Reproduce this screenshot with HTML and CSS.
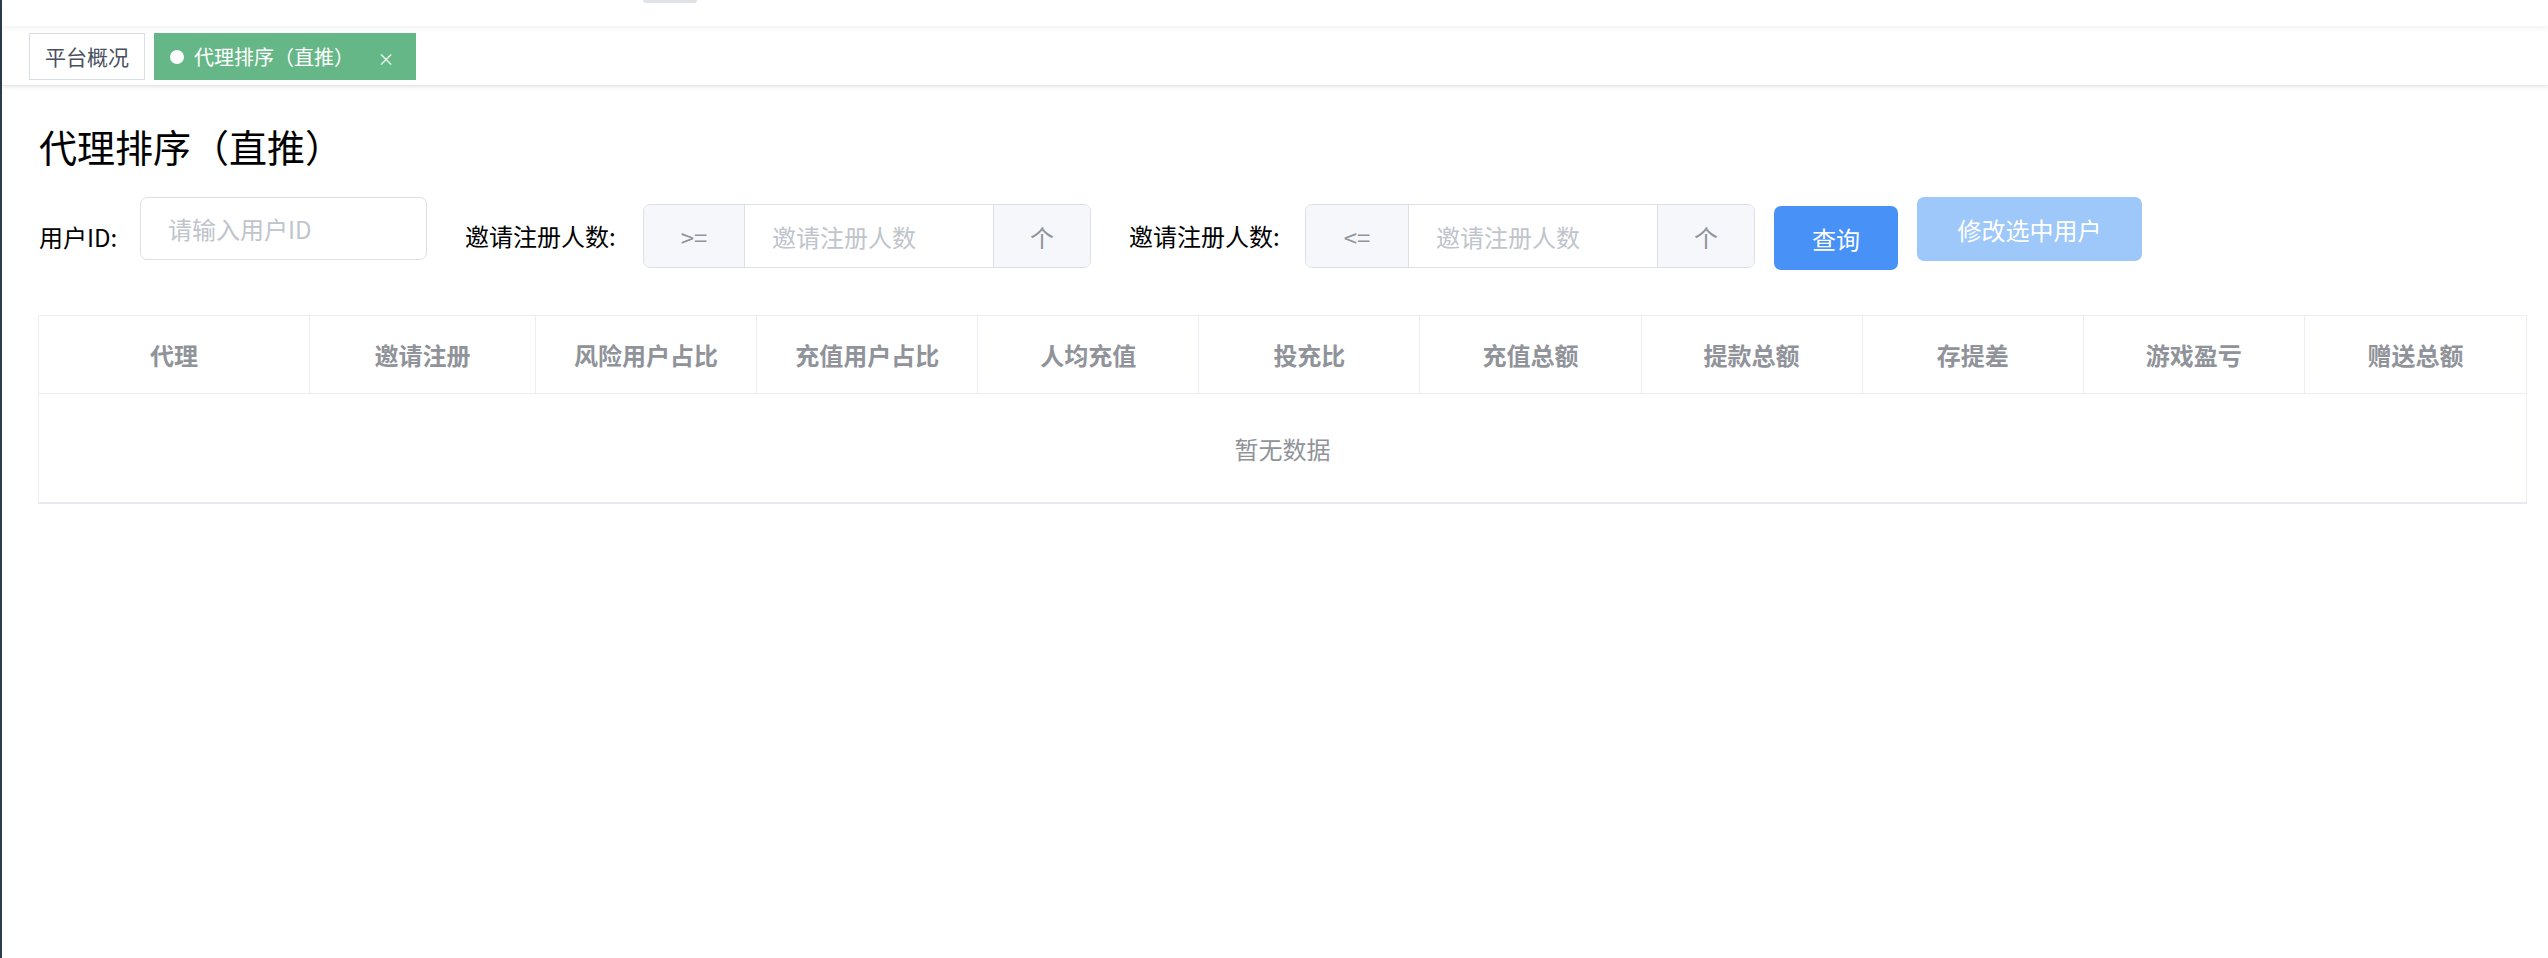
FILE: index.html
```html
<!DOCTYPE html>
<html lang="zh-CN">
<head>
<meta charset="utf-8">
<title>代理排序（直推）</title>
<link rel="stylesheet" href="styles.css">
</head>
<body>
<div class="app">
  <div class="sidebar"></div>
  <div class="main">
    <div class="navbar"><div class="pill"></div></div>
    <div class="tags">
      <div class="tag">平台概况</div>
      <div class="tag active"><span class="dot"></span><span>代理排序（直推）</span><span class="close">×</span></div>
    </div>
    <div class="content">
      <h2 class="title">代理排序（直推）</h2>
      <div class="filters">
        <div class="item item-id">
          <label class="label label-id">用户ID:</label>
          <input class="input input-id" type="text" placeholder="请输入用户ID">
        </div>
        <div class="item item-group">
          <label class="label label-count">邀请注册人数:</label>
          <div class="group">
            <div class="addon addon-pre">&gt;=</div>
            <input class="input input-mid" type="text" placeholder="邀请注册人数">
            <div class="addon addon-post">个</div>
          </div>
        </div>
        <div class="item item-group">
          <label class="label label-count">邀请注册人数:</label>
          <div class="group">
            <div class="addon addon-pre">&lt;=</div>
            <input class="input input-mid" type="text" placeholder="邀请注册人数">
            <div class="addon addon-post">个</div>
          </div>
        </div>
        <button class="btn btn-primary" type="button">查询</button>
        <button class="btn btn-disabled" type="button" disabled>修改选中用户</button>
      </div>
      <div class="table">
        <div class="thead">
          <div class="th">代理</div>
          <div class="th">邀请注册</div>
          <div class="th">风险用户占比</div>
          <div class="th">充值用户占比</div>
          <div class="th">人均充值</div>
          <div class="th">投充比</div>
          <div class="th">充值总额</div>
          <div class="th">提款总额</div>
          <div class="th">存提差</div>
          <div class="th">游戏盈亏</div>
          <div class="th">赠送总额</div>
        </div>
        <div class="empty">暂无数据</div>
      </div>
    </div>
  </div>
</div>
</body>
</html>
```
FILE: styles.css
```css
html, body {
  margin: 0;
  padding: 0;
  background: #fff;
}
body {
  font-family: "Noto Sans CJK SC", "Noto Sans", "Liberation Sans", sans-serif;
  font-size: 24px;
  color: #000;
}
.app {
  display: flex;
  min-height: 958px;
}
.sidebar {
  width: 2px;
  flex: none;
  background: #2e3b4e;
}
.main {
  flex: 1;
  display: flex;
  flex-direction: column;
  min-width: 0;
}
.navbar {
  height: 26px;
  background: #fff;
  position: relative;
  z-index: 2;
  box-shadow: 0 2px 6px rgba(0, 21, 41, 0.06);
}
.pill {
  margin-left: 641px;
  width: 54px;
  height: 3px;
  background: #dfe2e7;
  border-radius: 0 0 10px 10px;
}
.tags {
  height: 59px;
  box-sizing: border-box;
  padding: 7px 0 0 27px;
  display: flex;
  align-items: flex-start;
  gap: 9px;
  background: #fff;
  position: relative;
  z-index: 1;
  box-shadow: 0 2px 4px 0 rgba(0, 0, 0, 0.10), 0 0 3px 0 rgba(0, 0, 0, 0.04);
}
.tag {
  height: 47px;
  box-sizing: border-box;
  border: 1px solid #d8dce5;
  padding: 0 15px;
  display: flex;
  align-items: center;
  font-size: 21px;
  line-height: 21px;
  color: #495060;
  background: #fff;
}
.tag.active {
  background: #66b787;
  border-color: #66b787;
  color: #fff;
  font-size: 20px;
  padding-right: 16px;
}
.dot {
  width: 14px;
  height: 14px;
  border-radius: 50%;
  background: #fff;
  margin-right: 10px;
  flex: none;
}
.close {
  width: 26px;
  margin-left: 19px;
  text-align: center;
  font-size: 17px;
  line-height: 17px;
  padding-top: 4px;
  color: #eef7f1;
}
.content {
  padding: 0 21px 0 36px;
}
.title {
  margin: 42px 0 0 1px;
  font-size: 38px;
  line-height: 38px;
  font-weight: 400;
  color: #000;
}
.filters {
  margin-top: 32px;
  display: flex;
  align-items: flex-start;
}
.item {
  display: flex;
  align-items: flex-start;
  margin-right: 38px;
}
.label {
  font-size: 24px;
  line-height: 24px;
  color: #000;
  white-space: nowrap;
}
.label-id {
  width: 101px;
  margin-top: 28px;
  padding-left: 1px;
}
.label-count {
  width: 178px;
  margin-top: 27px;
}
.item-group:nth-child(3) .label-count {
  width: 176px;
}
.input {
  box-sizing: border-box;
  font-family: inherit;
  font-size: 24px;
  color: #606266;
  background: #fff;
  outline: none;
  margin: 0;
}
.input::placeholder {
  color: #c0c4cc;
}
.input-id {
  width: 287px;
  height: 63px;
  border: 1px solid #dcdfe6;
  border-radius: 7px;
  padding: 0 0 0 27px;
}
.group {
  margin-top: 7px;
  display: flex;
  height: 64px;
  box-sizing: border-box;
  border: 1px solid #dcdfe6;
  border-radius: 7px;
  overflow: hidden;
}
.addon {
  background: #f5f7fa;
  color: #909399;
  display: flex;
  align-items: center;
  justify-content: center;
  font-size: 24px;
  box-sizing: border-box;
}
.addon-pre {
  width: 101px;
  border-right: 1px solid #dcdfe6;
}
.item-group:nth-child(3) .addon-pre {
  width: 103px;
}
.addon-post {
  width: 97px;
  border-left: 1px solid #dcdfe6;
}
.input-mid {
  width: 248px;
  height: 62px;
  border: none;
  padding: 0 0 0 27px;
}
.btn {
  box-sizing: border-box;
  height: 64px;
  border: none;
  border-radius: 7px;
  font-family: inherit;
  font-size: 24px;
  color: #fff;
  padding: 0;
  margin: 0;
}
.btn-primary {
  width: 124px;
  margin: 9px 19px 0 -19px;
  background: #4791f7;
}
.btn-disabled {
  width: 225px;
  background: #9ec8f9;
  cursor: not-allowed;
}
.table {
  margin-top: 45px;
  border: 1px solid #ebeef5;
  border-bottom: 2px solid #e6e9f0;
  box-sizing: border-box;
}
.thead {
  display: grid;
  grid-template-columns: 271px 226px repeat(9, 1fr);
  height: 78px;
  border-bottom: 1px solid #ebeef5;
  box-sizing: border-box;
}
.th {
  display: flex;
  align-items: center;
  justify-content: center;
  border-right: 1px solid #ebeef5;
  color: #909399;
  font-weight: 700;
  font-size: 24px;
}
.th:last-child {
  border-right: none;
}
.empty {
  height: 108px;
  display: flex;
  align-items: center;
  justify-content: center;
  color: #909399;
  font-size: 24px;
}
```
